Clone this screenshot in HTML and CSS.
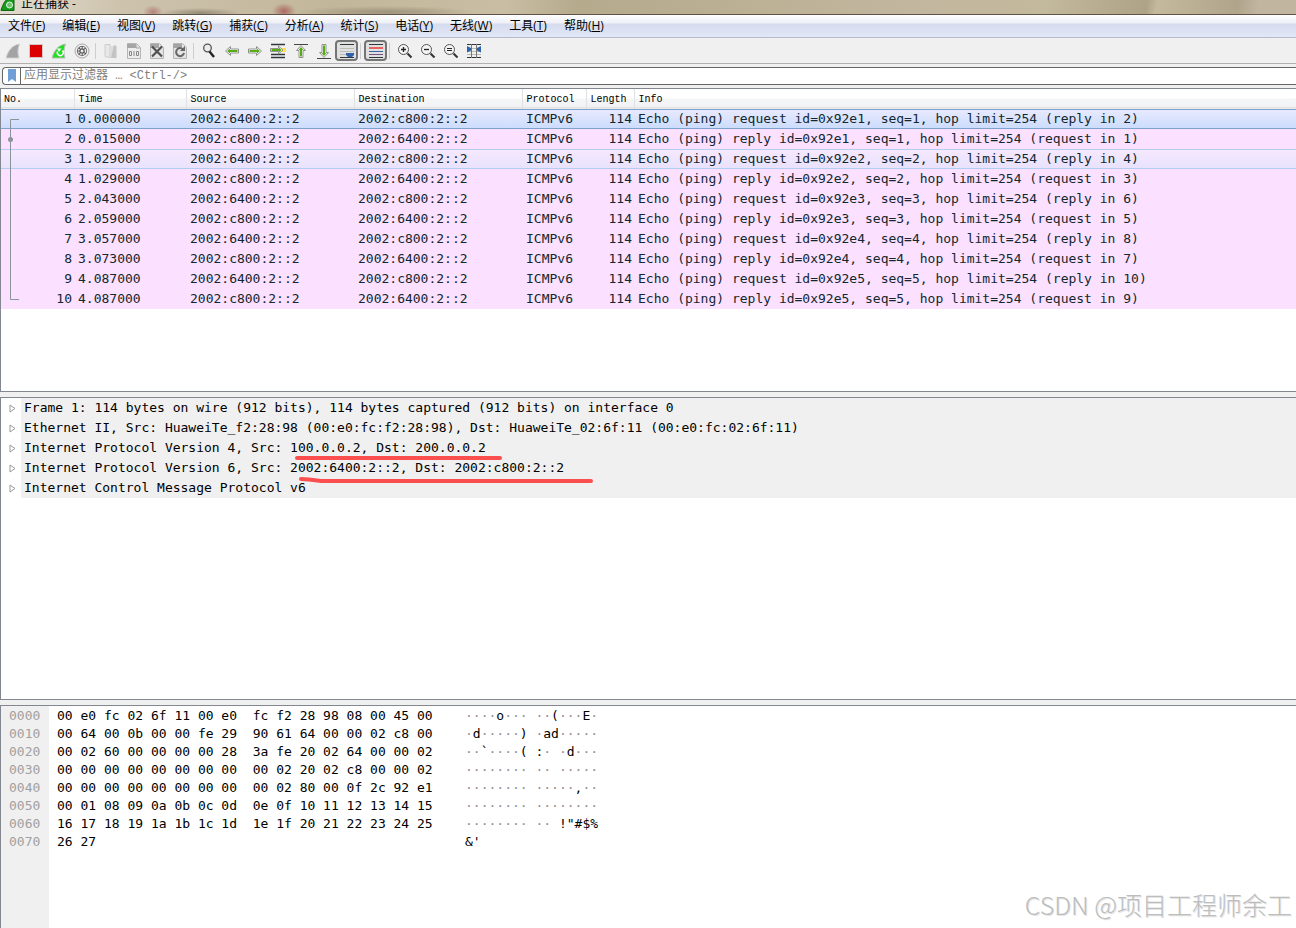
FILE: index.html
```
<!DOCTYPE html>
<html lang="zh-CN">
<head>
    <meta charset="UTF-8">
    <meta name="viewport" content="width=device-width, initial-scale=1.0">
    <title>正在捕获 -</title>
    <link rel="stylesheet" href="styles.css">
</head>
<body>

<header class="titlebar">
    <svg class="app-icon" width="16" height="16" viewBox="0 0 16 16"><path d="M1 15.500C3 8 6 3 14 0v15.500z" fill="#159a1d" stroke="#0b6a12"/><circle cx="9.500" cy="10" r="3" fill="#6cc36c" stroke="#e4f5e4"/></svg>
    <span>正在捕获 -</span>
</header>

<nav class="menubar">
    <button>文件(<u>F</u>)</button>
    <button>编辑(<u>E</u>)</button>
    <button>视图(<u>V</u>)</button>
    <button>跳转(<u>G</u>)</button>
    <button>捕获(<u>C</u>)</button>
    <button>分析(<u>A</u>)</button>
    <button>统计(<u>S</u>)</button>
    <button>电话(<u>Y</u>)</button>
    <button>无线(<u>W</u>)</button>
    <button>工具(<u>T</u>)</button>
    <button>帮助(<u>H</u>)</button>
</nav>

<div class="toolbar">
    <button aria-label="Start capture"><svg viewBox="0 0 16 16"><path d="M1 15C3 8 7 2 14.500 1c-2 5-2 9-.5 14z" fill="#a3a3a3" stroke="#d0d0d0"/></svg></button>
    <button aria-label="Stop capture"><svg viewBox="0 0 16 16"><path d="M1.500 1.500h13v13h-13z" fill="#d00" stroke="#d9c4c4"/></svg></button>
    <button aria-label="Restart capture"><svg viewBox="0 0 16 16"><path d="M1 15C3 8 7 2 14.500 1c-2 5-2 9-.5 14z" fill="#1fe01f" stroke="#bcbcbc"/><path d="M11.500 7.500a3 3 0 1 1-5 1" fill="none" stroke="#fff" stroke-width="1.500"/><path d="M6 5.500h4.500L8 9z" fill="#fff"/></svg></button>
    <button aria-label="Capture options"><svg viewBox="0 0 16 16"><circle cx="8" cy="8" r="7" fill="#eee" stroke="#aaa"/><circle cx="8" cy="8" r="5" fill="#555"/><circle cx="8" cy="8" r="3.500" fill="none" stroke="#eee" stroke-width="1.500" stroke-dasharray="1.800 1"/><circle cx="8" cy="8" r="1.500" fill="#eee"/></svg></button>
    <span class="sep"></span>
    <button aria-label="Open"><svg viewBox="0 0 16 16"><path d="M2 1.500h5v13l-5-1z" fill="#e8e8e8" stroke="#ccc"/><path d="M7 3h4v12H7z" fill="#dcdcdc"/><path d="M11 2l2.500 1v12H8z" fill="#c4c4c4"/></svg></button>
    <button aria-label="Save"><svg viewBox="0 0 16 16"><path d="M1.500.5h9l4 4v11h-13z" fill="#ececec" stroke="#b5b5b5"/><path d="M1 1h9v4H1z" fill="#a5a5a5"/><path d="M10 1v4h4" fill="#ddd" stroke="#aaa"/><path d="M3.500 8.500h2v4h-2zM8 8v5M10.500 8.500h2v4h-2z" fill="none" stroke="#888"/></svg></button>
    <button aria-label="Close file"><svg viewBox="0 0 16 16"><path d="M1.500.5h9l4 4v11h-13z" fill="#e4e4e4" stroke="#b5b5b5"/><path d="M1 1h9v4H1z" fill="#a5a5a5"/><path d="M3 3.500l10 10M13 3.500l-10 10" stroke="#505050" stroke-width="2.200"/></svg></button>
    <button aria-label="Reload"><svg viewBox="0 0 16 16"><path d="M1.500.5h9l4 4v11h-13z" fill="#e4e4e4" stroke="#b5b5b5"/><path d="M1 1h9v4H1z" fill="#a5a5a5"/><path d="M11.500 7A4 4 0 1 0 12 10" fill="none" stroke="#666" stroke-width="2"/><path d="M13 3v5H8z" fill="#666"/></svg></button>
    <span class="sep"></span>
    <button aria-label="Find packet"><svg viewBox="0 0 16 16"><circle cx="6.500" cy="5" r="3.800" fill="#e8edf0" stroke="#555" stroke-width="1.300"/><path d="M8.500 8.500l4.500 5.500" stroke="#222" stroke-width="2.400"/></svg></button>
    <button aria-label="Previous packet"><svg viewBox="0 0 16 16"><path d="M1.500 8l5-4.500v2.500h8v4h-8v2.500z" fill="#fff" stroke="#909090"/><path d="M3 8l3-2.500V7h7.500v2H6v1.500z" fill="#55ad10"/></svg></button>
    <button aria-label="Next packet"><svg viewBox="0 0 16 16"><path d="M14.500 8l-5-4.500v2.500h-8v4h8v2.500z" fill="#fff" stroke="#909090"/><path d="M13 8l-3-2.500V7H2.500v2H10v1.500z" fill="#55ad10"/></svg></button>
    <button aria-label="Go to packet"><svg viewBox="0 0 16 16"><path d="M1 1.500h14M1 11.500h14M1 14.500h14" stroke="#30373a" stroke-width="1.300"/><path d="M10 5h6v4h-6z" fill="#ffe14d"/><path d="M13 7l-4.500-4v2.500h-8v3h8V11z" fill="#fff" stroke="#909090"/><path d="M11.500 7L9 4.500V6H1.500v2H9v1.500z" fill="#55ad10"/></svg></button>
    <button aria-label="First packet"><svg viewBox="0 0 16 16"><path d="M1 1.500h14" stroke="#444"/><path d="M8 2.500l4.500 5H10v7H6v-7H3.500z" fill="#fff" stroke="#909090"/><path d="M8 4l2.500 3H9v6.500H7V7H5.500z" fill="#55ad10"/></svg></button>
    <button aria-label="Last packet"><svg viewBox="0 0 16 16"><path d="M1 15.500h14" stroke="#444"/><path d="M8 14.500l4.500-5H10v-8H6v8H3.500z" fill="#fff" stroke="#909090"/><path d="M8 13l2.500-3H9V2.500H7V10H5.500z" fill="#55ad10"/></svg></button>
    <button class="pressed" aria-label="Auto scroll"><svg viewBox="0 0 16 16"><path d="M1 1.500h14M1 14.500h14" stroke="#30373a"/><path d="M1 5.500h14M1 8.500h14M1 11.500h7" stroke="#b9bdb4"/><path d="M7 10h8v2l-2 2H9l-2-2z" fill="#2f62a8"/></svg></button>
    <span class="sep"></span>
    <button class="pressed" aria-label="Colorize"><svg viewBox="0 0 16 16"><path d="M1 1.500h14M1 14.500h14" stroke="#30373a"/><path d="M1 5h14" stroke="#ef2929" stroke-width="1.400"/><path d="M1 8.500h14" stroke="#3465a4"/><path d="M1 11.500h14" stroke="#75507b"/></svg></button>
    <span class="sep"></span>
    <button aria-label="Zoom in"><svg viewBox="0 0 16 16"><circle cx="6.500" cy="6.500" r="5" fill="#f4f4f4" stroke="#555"/><path d="M4 6.500h5M6.500 4v5" stroke="#222" stroke-width="1.300"/><path d="M10.500 10.500l4 4" stroke="#30373a" stroke-width="2.200"/></svg></button>
    <button aria-label="Zoom out"><svg viewBox="0 0 16 16"><circle cx="6.500" cy="6.500" r="5" fill="#f4f4f4" stroke="#555"/><path d="M4 6.500h5" stroke="#222" stroke-width="1.300"/><path d="M10.500 10.500l4 4" stroke="#30373a" stroke-width="2.200"/></svg></button>
    <button aria-label="Normal size"><svg viewBox="0 0 16 16"><circle cx="6.500" cy="6.500" r="5" fill="#f4f4f4" stroke="#555"/><path d="M4 5.500h5M4 7.500h5" stroke="#222"/><path d="M10.500 10.500l4 4" stroke="#30373a" stroke-width="2.200"/></svg></button>
    <button aria-label="Resize columns"><svg viewBox="0 0 16 16"><path d="M1 1.500h14M1 14.500h14" stroke="#30373a"/><path d="M1 5.500h14M1 8.500h14M1 11.500h14" stroke="#b9bdb4"/><path d="M5.500 1v14M10.500 1v14" stroke="#777"/><path d="M1 3l4 2v2.500L1 9.500zM15 3l-4 2v2.500l4 2z" fill="#2f62a8"/></svg></button>
</div>

<form class="filterbar">
    <button type="button" aria-label="Bookmarks"><svg width="10" height="14" viewBox="0 0 10 14"><path d="M1 0h8v13l-4-3-4 3z" fill="#6f9fd4"/></svg></button>
    <input type="text" aria-label="Display filter" placeholder="应用显示过滤器 … &lt;Ctrl-/&gt;">
</form>

<main>
    <section class="pane packets">
        <table>
            <colgroup><col class="c-no"><col class="c-time"><col class="c-addr"><col class="c-addr"><col class="c-proto"><col class="c-len"><col></colgroup>
            <thead><tr><th>No.</th><th>Time</th><th>Source</th><th>Destination</th><th>Protocol</th><th>Length</th><th>Info</th></tr></thead>
            <tbody>
                <tr class="selected"><td>1</td><td>0.000000</td><td>2002:6400:2::2</td><td>2002:c800:2::2</td><td>ICMPv6</td><td>114</td><td>Echo (ping) request id=0x92e1, seq=1, hop limit=254 (reply in 2)</td></tr>
                <tr><td>2</td><td>0.015000</td><td>2002:c800:2::2</td><td>2002:6400:2::2</td><td>ICMPv6</td><td>114</td><td>Echo (ping) reply id=0x92e1, seq=1, hop limit=254 (request in 1)</td></tr>
                <tr class="hover"><td>3</td><td>1.029000</td><td>2002:6400:2::2</td><td>2002:c800:2::2</td><td>ICMPv6</td><td>114</td><td>Echo (ping) request id=0x92e2, seq=2, hop limit=254 (reply in 4)</td></tr>
                <tr><td>4</td><td>1.029000</td><td>2002:c800:2::2</td><td>2002:6400:2::2</td><td>ICMPv6</td><td>114</td><td>Echo (ping) reply id=0x92e2, seq=2, hop limit=254 (request in 3)</td></tr>
                <tr><td>5</td><td>2.043000</td><td>2002:6400:2::2</td><td>2002:c800:2::2</td><td>ICMPv6</td><td>114</td><td>Echo (ping) request id=0x92e3, seq=3, hop limit=254 (reply in 6)</td></tr>
                <tr><td>6</td><td>2.059000</td><td>2002:c800:2::2</td><td>2002:6400:2::2</td><td>ICMPv6</td><td>114</td><td>Echo (ping) reply id=0x92e3, seq=3, hop limit=254 (request in 5)</td></tr>
                <tr><td>7</td><td>3.057000</td><td>2002:6400:2::2</td><td>2002:c800:2::2</td><td>ICMPv6</td><td>114</td><td>Echo (ping) request id=0x92e4, seq=4, hop limit=254 (reply in 8)</td></tr>
                <tr><td>8</td><td>3.073000</td><td>2002:c800:2::2</td><td>2002:6400:2::2</td><td>ICMPv6</td><td>114</td><td>Echo (ping) reply id=0x92e4, seq=4, hop limit=254 (request in 7)</td></tr>
                <tr><td>9</td><td>4.087000</td><td>2002:6400:2::2</td><td>2002:c800:2::2</td><td>ICMPv6</td><td>114</td><td>Echo (ping) request id=0x92e5, seq=5, hop limit=254 (reply in 10)</td></tr>
                <tr><td>10</td><td>4.087000</td><td>2002:c800:2::2</td><td>2002:6400:2::2</td><td>ICMPv6</td><td>114</td><td>Echo (ping) reply id=0x92e5, seq=5, hop limit=254 (request in 9)</td></tr>
            </tbody>
        </table>
        <!-- conversation bracket -->
        <svg class="related" width="20" height="200" viewBox="0 0 20 200"><path d="M18 10.500H9.500v180H18" fill="none" stroke="#8a9499"/><circle cx="9.500" cy="30.500" r="2.500" fill="#8a9499"/></svg>
    </section>

    <section class="pane tree">
        <ul>
            <li><button aria-label="Expand"><svg width="7" height="9" viewBox="0 0 7 9"><path d="M1 1v7l5-3.500z" fill="#fff" stroke="#999"/></svg></button><span>Frame 1: 114 bytes on wire (912 bits), 114 bytes captured (912 bits) on interface 0</span></li>
            <li><button aria-label="Expand"><svg width="7" height="9" viewBox="0 0 7 9"><path d="M1 1v7l5-3.500z" fill="#fff" stroke="#999"/></svg></button><span>Ethernet II, Src: HuaweiTe_f2:28:98 (00:e0:fc:f2:28:98), Dst: HuaweiTe_02:6f:11 (00:e0:fc:02:6f:11)</span></li>
            <li><button aria-label="Expand"><svg width="7" height="9" viewBox="0 0 7 9"><path d="M1 1v7l5-3.500z" fill="#fff" stroke="#999"/></svg></button><span>Internet Protocol Version 4, Src: 100.0.0.2, Dst: 200.0.0.2</span></li>
            <li><button aria-label="Expand"><svg width="7" height="9" viewBox="0 0 7 9"><path d="M1 1v7l5-3.500z" fill="#fff" stroke="#999"/></svg></button><span>Internet Protocol Version 6, Src: 2002:6400:2::2, Dst: 2002:c800:2::2</span></li>
            <li><button aria-label="Expand"><svg width="7" height="9" viewBox="0 0 7 9"><path d="M1 1v7l5-3.500z" fill="#fff" stroke="#999"/></svg></button><span>Internet Control Message Protocol v6</span></li>
        </ul>
        <!-- red marker strokes -->
        <svg class="marks" width="320" height="40" viewBox="0 0 320 40" fill="none" stroke="#fb4f4f" stroke-width="4" stroke-linecap="round"><path d="M6 10h203"/><path d="M10 31l8 .5 12 1.500h270"/></svg>
    </section>

    <section class="pane hex">
<pre class="offsets">0000
0010
0020
0030
0040
0050
0060
0070</pre>
<pre class="bytes">00 e0 fc 02 6f 11 00 e0  fc f2 28 98 08 00 45 00
00 64 00 0b 00 00 fe 29  90 61 64 00 00 02 c8 00
00 02 60 00 00 00 00 28  3a fe 20 02 64 00 00 02
00 00 00 00 00 00 00 00  00 02 20 02 c8 00 00 02
00 00 00 00 00 00 00 00  00 02 80 00 0f 2c 92 e1
00 01 08 09 0a 0b 0c 0d  0e 0f 10 11 12 13 14 15
16 17 18 19 1a 1b 1c 1d  1e 1f 20 21 22 23 24 25
26 27</pre>
<pre class="ascii"><i>····</i>o<i>··· ··</i>(<i>···</i>E<i>·</i>
<i>·</i>d<i>·····</i>) <i>·</i>ad<i>·····</i>
<i>··</i>`<i>····</i>( :<i>· ·</i>d<i>···</i>
<i>········ ·· ·····</i>
<i>········ ·····</i>,<i>··</i>
<i>········ ········</i>
<i>········ ··</i> !"#$%
&amp;'</pre>
    </section>
</main>

<div class="watermark">CSDN @项目工程师余工</div>

</body>
</html>
```
FILE: styles.css
```
:root { --mono: "DejaVu Sans Mono", "Liberation Mono", monospace; --ui: "Open Sans", "Noto Sans CJK SC", sans-serif; --line: #828790; --bg: #f0f0f0; }
* { box-sizing: border-box; }
body { margin: 0; min-height: 100vh; display: flex; flex-direction: column; background: var(--bg); font: 12px var(--ui); color: #000; position: relative; }
button { border: 0; background: none; padding: 0; font: inherit; color: inherit; }
svg { display: block; }

.titlebar {
    height: 15px; display: flex; gap: 5px; overflow: hidden; line-height: 8px; border-bottom: 1px solid #5d5348;
    background:
        radial-gradient(ellipse 10px 7px at 153px 12px, #b5837a, transparent),
        radial-gradient(ellipse 12px 8px at 284px 11px, #ac6a64, transparent),
        radial-gradient(ellipse 40px 5px at 200px 13px, #948a76, transparent),
        radial-gradient(ellipse 90px 6px at 385px 12px, #9d927b, transparent),
        linear-gradient(100deg, #e3ddd0 0, #cdc3ad 120px, #c2b69a 330px, #c9bea4 500px, #b5aa8c 570px, #bcb095 740px, #c3b69f 900px, #c3b99c 1030px, #aea287 1130px, #c4b99c 1140px, #b0a48b 1220px, #c2b5a0 1240px);
}
.app-icon { flex: none; margin-top: -5px; }

.menubar { height: 23px; display: flex; gap: 1px; background: linear-gradient(#fff 0, #eef0f7 8px, #d5dcee 9px, #e2e7f6 100%); border-bottom: 1px solid #b6bccc; }
.menubar button { padding: 0 8px; line-height: 22px; }

.toolbar { height: 26px; display: flex; align-items: center; padding-left: 1px; border-bottom: 1px solid #b0b0b0; }
.toolbar button { width: 23px; height: 21px; display: flex; align-items: center; justify-content: center; border-radius: 4px; }
.toolbar svg { width: 16px; height: 16px; flex: none; }
.toolbar .pressed { border: 2px solid #757575; background: #e0e0e0; }
.sep { width: 6px; height: 16px; background: linear-gradient(#cdcdcd, #cdcdcd) 2px 0 / 1px 100% no-repeat; }

.filterbar { height: 18px; margin: 3px 0 3px 2px; display: flex; background: #fff; border: 1px solid #666; border-right: 0; border-radius: 4px 0 0 4px; }
.filterbar button { width: 18px; border-right: 1px solid #666; display: flex; align-items: center; justify-content: center; }
.filterbar input { flex: 1; border: 0; outline: 0; padding: 0 3px; background: none; font: 12px "Liberation Mono", "Noto Sans CJK SC", monospace; }
.filterbar input::placeholder { color: #808080; }

main { flex: 1; display: grid; grid-template-rows: 304fr 303fr 223fr; gap: 5px; font: 13px/20px var(--mono); }
.pane { position: relative; background: #fff; border: 1px solid var(--line); border-right: 0; overflow: hidden; }

table { width: 100%; table-layout: fixed; border-collapse: collapse; }
.c-no { width: 73px; }
.c-time { width: 112px; }
.c-addr { width: 168px; }
.c-proto { width: 64px; }
.c-len { width: 48px; }
th { height: 20px; padding: 2px 4px 0; text-align: left; font: 10px/18px "Liberation Mono", monospace; background: linear-gradient(#fff 9px, #f4f5f6 10px, #f1f2f4 18px, #d5d5d5 19px, #fff 20px); border-right: 1px solid #e0e1e3; }
th:first-child { padding-left: 3px; }
th:last-child { border-right: 0; }
td { height: 20px; padding: 0 2px 0 4px; white-space: nowrap; color: #12272e; }
td:first-child, td:nth-child(6) { text-align: right; }
tbody tr { background: #fbe0ff; }
tbody .selected { background: linear-gradient(#e9eafe, #cbdcfd); box-shadow: inset 0 1px #7da2ce, inset 0 -1px #7da2ce; }
tbody .hover { background: linear-gradient(#f6e8fe, #e8e2fd); box-shadow: inset 0 1px #b4cdf3, inset 0 -1px #b4cdf3; }
.related { position: absolute; left: 0; top: 20px; }

.tree ul { list-style: none; margin: 0; padding: 0; }
.tree li { display: flex; white-space: pre; }
.tree li button { width: 20px; padding-left: 8px; }
.tree li span { flex: 1; padding-left: 3px; background: var(--bg); }
.marks { position: absolute; left: 290px; top: 50px; }

.hex { display: flex; border-bottom: 0; line-height: 18px; }
.hex pre { margin: 0; padding: 1px 0 0 8px; font: inherit; flex: none; }
.hex i { font-style: normal; color: #909090; }
.hex .offsets { width: 48px; background: var(--bg); color: #a0a0a0; }
.hex .bytes { width: 408px; }

.watermark { position: absolute; right: 4px; bottom: 6px; font: 300 25px/36px "Noto Sans CJK SC", sans-serif; color: #bdbdbd; text-shadow: 1px 1px #e4e4e4; white-space: nowrap; }
```
